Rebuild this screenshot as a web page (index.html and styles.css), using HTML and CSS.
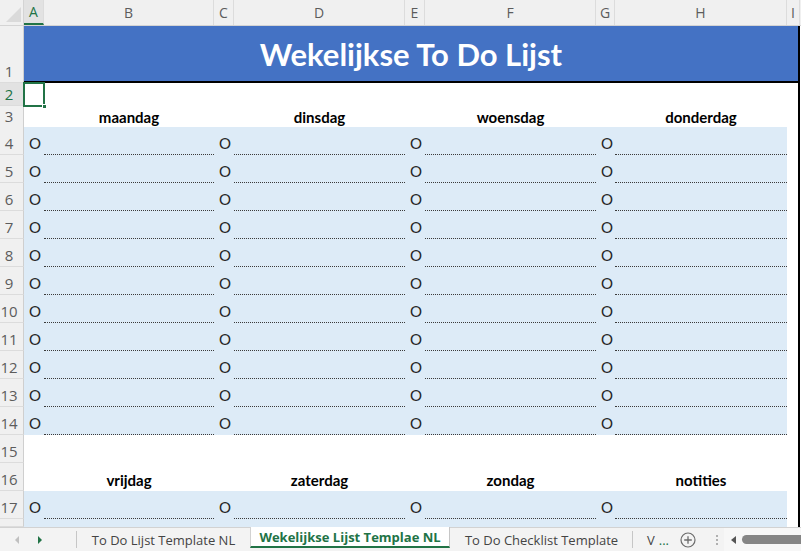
FILE: index.html
```html
<!DOCTYPE html>
<html>
<head lang="nl">
    <meta charset="UTF-8">
    <title>Wekelijkse To Do Lijst</title>
    <link rel="stylesheet" href="styles.css">
</head>
<body>
<div class="sheet">
    <div class="grid">
        <div class="row colhead">
            <div class="corner"><span class="tri"></span></div>
            <div class="ch sel">A</div><div class="ch">B</div><div class="ch">C</div><div class="ch">D</div>
            <div class="ch">E</div><div class="ch">F</div><div class="ch">G</div><div class="ch">H</div>
            <div class="ch">I</div><div class="ch last"></div>
        </div>
        <div class="row r1">
            <div class="rh">1</div>
            <div class="title">Wekelijkse To Do Lijst</div>
            <div class="c"></div>
        </div>
        <div class="row r2">
            <div class="rh sel">2</div>
            <div class="c active"><span class="handle"></span></div>
            <div class="c"></div><div class="c"></div><div class="c"></div><div class="c"></div>
            <div class="c"></div><div class="c"></div><div class="c"></div>
            <div class="c edge"></div><div class="c"></div>
        </div>
        <div class="row r3 days">
            <div class="rh">3</div>
            <div class="c"></div><div class="c day">maandag</div>
            <div class="c"></div><div class="c day">dinsdag</div>
            <div class="c"></div><div class="c day">woensdag</div>
            <div class="c"></div><div class="c day">donderdag</div>
            <div class="c edge"></div><div class="c"></div>
        </div>
        <div class="row task"><div class="rh">4</div><div class="c o">O</div><div class="c line"></div><div class="c o">O</div><div class="c line"></div><div class="c o">O</div><div class="c line"></div><div class="c o">O</div><div class="c line"></div><div class="c edge"></div><div class="c"></div></div>
        <div class="row task"><div class="rh">5</div><div class="c o">O</div><div class="c line"></div><div class="c o">O</div><div class="c line"></div><div class="c o">O</div><div class="c line"></div><div class="c o">O</div><div class="c line"></div><div class="c edge"></div><div class="c"></div></div>
        <div class="row task"><div class="rh">6</div><div class="c o">O</div><div class="c line"></div><div class="c o">O</div><div class="c line"></div><div class="c o">O</div><div class="c line"></div><div class="c o">O</div><div class="c line"></div><div class="c edge"></div><div class="c"></div></div>
        <div class="row task"><div class="rh">7</div><div class="c o">O</div><div class="c line"></div><div class="c o">O</div><div class="c line"></div><div class="c o">O</div><div class="c line"></div><div class="c o">O</div><div class="c line"></div><div class="c edge"></div><div class="c"></div></div>
        <div class="row task"><div class="rh">8</div><div class="c o">O</div><div class="c line"></div><div class="c o">O</div><div class="c line"></div><div class="c o">O</div><div class="c line"></div><div class="c o">O</div><div class="c line"></div><div class="c edge"></div><div class="c"></div></div>
        <div class="row task"><div class="rh">9</div><div class="c o">O</div><div class="c line"></div><div class="c o">O</div><div class="c line"></div><div class="c o">O</div><div class="c line"></div><div class="c o">O</div><div class="c line"></div><div class="c edge"></div><div class="c"></div></div>
        <div class="row task"><div class="rh">10</div><div class="c o">O</div><div class="c line"></div><div class="c o">O</div><div class="c line"></div><div class="c o">O</div><div class="c line"></div><div class="c o">O</div><div class="c line"></div><div class="c edge"></div><div class="c"></div></div>
        <div class="row task"><div class="rh">11</div><div class="c o">O</div><div class="c line"></div><div class="c o">O</div><div class="c line"></div><div class="c o">O</div><div class="c line"></div><div class="c o">O</div><div class="c line"></div><div class="c edge"></div><div class="c"></div></div>
        <div class="row task"><div class="rh">12</div><div class="c o">O</div><div class="c line"></div><div class="c o">O</div><div class="c line"></div><div class="c o">O</div><div class="c line"></div><div class="c o">O</div><div class="c line"></div><div class="c edge"></div><div class="c"></div></div>
        <div class="row task"><div class="rh">13</div><div class="c o">O</div><div class="c line"></div><div class="c o">O</div><div class="c line"></div><div class="c o">O</div><div class="c line"></div><div class="c o">O</div><div class="c line"></div><div class="c edge"></div><div class="c"></div></div>
        <div class="row task"><div class="rh">14</div><div class="c o">O</div><div class="c line"></div><div class="c o">O</div><div class="c line"></div><div class="c o">O</div><div class="c line"></div><div class="c o">O</div><div class="c line"></div><div class="c edge"></div><div class="c"></div></div>
        <div class="row blank">
            <div class="rh">15</div>
            <div class="c"></div><div class="c"></div><div class="c"></div><div class="c"></div>
            <div class="c"></div><div class="c"></div><div class="c"></div><div class="c"></div>
            <div class="c edge"></div><div class="c"></div>
        </div>
        <div class="row days">
            <div class="rh">16</div>
            <div class="c"></div><div class="c day">vrijdag</div>
            <div class="c"></div><div class="c day">zaterdag</div>
            <div class="c"></div><div class="c day">zondag</div>
            <div class="c"></div><div class="c day">notities</div>
            <div class="c edge"></div><div class="c"></div>
        </div>
        <div class="row task"><div class="rh">17</div><div class="c o">O</div><div class="c line"></div><div class="c o">O</div><div class="c line"></div><div class="c o">O</div><div class="c line"></div><div class="c o">O</div><div class="c line"></div><div class="c edge"></div><div class="c"></div></div>
        <div class="row task cut"><div class="rh"></div><div class="c o"></div><div class="c line"></div><div class="c o"></div><div class="c line"></div><div class="c o"></div><div class="c line"></div><div class="c o"></div><div class="c line"></div><div class="c edge"></div><div class="c"></div></div>
    </div>

    <div class="tabs">
        <div class="nav">
            <span class="arr left"></span>
            <span class="arr right"></span>
        </div>
        <div class="tab first">To Do Lijst Template NL</div>
        <div class="tab current">Wekelijkse Lijst Templae NL</div>
        <div class="tab third">To Do Checklist Template</div>
        <div class="tab more">V<span class="ell">...</span></div>
        <div class="add">
            <svg width="16" height="16" viewBox="0 0 16 16">
                <circle cx="8" cy="8" r="7" fill="none" stroke="#6b6b6b" stroke-width="1.2"/>
                <path d="M8 4.2v7.6M4.2 8h7.6" stroke="#6b6b6b" stroke-width="1.3"/>
            </svg>
        </div>
        <div class="grip"><i></i><i></i><i></i></div>
        <div class="hscroll">
            <span class="sleft"></span>
            <span class="thumb"></span>
        </div>
    </div>
</div>
</body>
</html>
```

FILE: styles.css
```css
*
{
    margin: 0;
    padding: 0;
    box-sizing: border-box;
}
body
{
    width: 801px;
    height: 551px;
    overflow: hidden;
    background: #fff;
    font-family: Lato, "Liberation Sans", sans-serif;
}
.sheet
{
    height: 551px;
    display: flex;
    flex-direction: column;
}
.grid
{
    flex: 1;
    overflow: hidden;
}
.row
{
    display: grid;
    grid-template-columns: 24px 20px 170px 20px 171px 20px 171px 19px 172px 13px 1fr;
}

/* column letters */
.colhead
{
    height: 26px;
    background: #f0f0f0;
    border-bottom: 1px solid #d4d4d4;
}
.corner
{
    display: flex;
    justify-content: flex-end;
    align-items: flex-end;
    padding: 0 2px 3px 0;
    border-right: 1px solid #d4d4d4;
}
.tri
{
    width: 0;
    height: 0;
    border-left: 15px solid transparent;
    border-bottom: 15px solid #dadada;
}
.ch
{
    font-family: "Open Sans", "Noto Sans", sans-serif;
    font-size: 14px;
    line-height: 25px;
    text-align: center;
    color: #5c5c5c;
    border-right: 1px solid #dcdcdc;
}
.ch.sel
{
    background: #e2e2e2;
    color: #217346;
    border-bottom: 2px solid #217346;
    line-height: 23px;
}
.ch.last
{
    border-right: none;
}

/* row numbers */
.rh
{
    font-family: "Open Sans", "Noto Sans", sans-serif;
    font-size: 15px;
    line-height: 20px;
    color: #5c5c5c;
    background: #f0f0f0;
    border-right: 1px solid #cfcfcf;
    border-bottom: 1px solid #dcdcdc;
    display: flex;
    justify-content: center;
    align-items: flex-end;
    padding: 0 5px 1px 0;
}
.rh.sel
{
    background: #e2e2e2;
    color: #217346;
}

.r1
{
    height: 57px;
}
.title
{
    grid-column: 2 / 11;
    background: #4472c4;
    border-bottom: 2px solid #000;
    border-right: 2px solid #000;
    color: #fff;
    font-weight: bold;
    font-size: 31px;
    display: flex;
    align-items: center;
    justify-content: center;
    padding-top: 1px;
}
.r2
{
    height: 23px;
}
.edge
{
    border-right: 2px solid #000;
}

.active
{
    position: relative;
}
.active::after
{
    content: "";
    position: absolute;
    left: -1px;
    top: -1px;
    right: -1px;
    bottom: -1px;
    border: 2px solid #217346;
}
.handle
{
    position: absolute;
    right: -3px;
    bottom: -3px;
    width: 5px;
    height: 5px;
    background: #217346;
    border: 1px solid #fff;
    z-index: 2;
}

.days
{
    height: 28px;
}
.r3.days
{
    height: 21px;
}
.day
{
    font-weight: bold;
    font-size: 15px;
    color: #000;
    text-align: center;
    display: flex;
    align-items: flex-end;
    justify-content: center;
    padding-bottom: 2px;
    line-height: 18px;
}
.blank
{
    height: 28px;
}

/* task rows */
.task
{
    height: 28px;
}
.task .o,
.task .line
{
    background: #ddebf7;
}
.o
{
    font-size: 15px;
    color: #262626;
    display: flex;
    align-items: flex-end;
    padding: 0 0 3px 5px;
    line-height: 18px;
}
.line
{
    border-bottom: 1px dotted #3a3a3a;
}
.cut
{
    height: 8px;
}
.cut .line
{
    border-bottom: none;
}

/* sheet tabs */
.tabs
{
    height: 24px;
    flex: none;
    display: flex;
    background: #f3f3f3;
    border-top: 1px solid #d2d2d2;
    font-family: "Open Sans", "Noto Sans", sans-serif;
    font-size: 13px;
    color: #444;
}
.nav
{
    width: 77px;
    display: flex;
    align-items: center;
    gap: 19px;
    padding-left: 15px;
    position: relative;
}
.nav::after
{
    content: "";
    position: absolute;
    right: 0;
    top: 3px;
    height: 17px;
    border-right: 1px solid #c6c6c6;
}
.arr
{
    width: 0;
    height: 0;
    border-top: 4px solid transparent;
    border-bottom: 4px solid transparent;
}
.arr.left
{
    border-right: 4px solid #c0c0c0;
}
.arr.right
{
    border-left: 4px solid #217346;
}
.tab
{
    display: flex;
    align-items: center;
    justify-content: center;
    white-space: nowrap;
}
.first
{
    width: 173px;
}
.current
{
    width: 200px;
    background: #fff;
    color: #217346;
    font-weight: bold;
    border-left: 1px solid #d2d2d2;
    border-right: 1px solid #c6c6c6;
    border-bottom: 2px solid #217346;
    margin-top: -1px;
    margin-bottom: 3px;
}
.third
{
    width: 183px;
    position: relative;
}
.third::after
{
    content: "";
    position: absolute;
    right: 0;
    top: 3px;
    height: 17px;
    border-right: 1px solid #c6c6c6;
}
.more
{
    width: 46px;
    justify-content: flex-start;
    padding-left: 14px;
}
.ell
{
    color: #217346;
    margin-left: 4px;
}
.add
{
    width: 30px;
    display: flex;
    align-items: center;
    padding-left: 1px;
}
.grip
{
    width: 15px;
    display: flex;
    flex-direction: column;
    align-items: center;
    justify-content: center;
    gap: 2px;
}
.grip i
{
    width: 2px;
    height: 2px;
    background: #b0b0b0;
}
.hscroll
{
    flex: 1;
    display: flex;
    align-items: center;
    padding-left: 7px;
    background: #f7f7f7;
}
.sleft
{
    width: 0;
    height: 0;
    border-top: 4px solid transparent;
    border-bottom: 4px solid transparent;
    border-right: 5px solid #555;
}
.thumb
{
    flex: 1;
    height: 9px;
    margin-left: 6px;
    background: #858585;
    border-radius: 5px 0 0 5px;
}
```
